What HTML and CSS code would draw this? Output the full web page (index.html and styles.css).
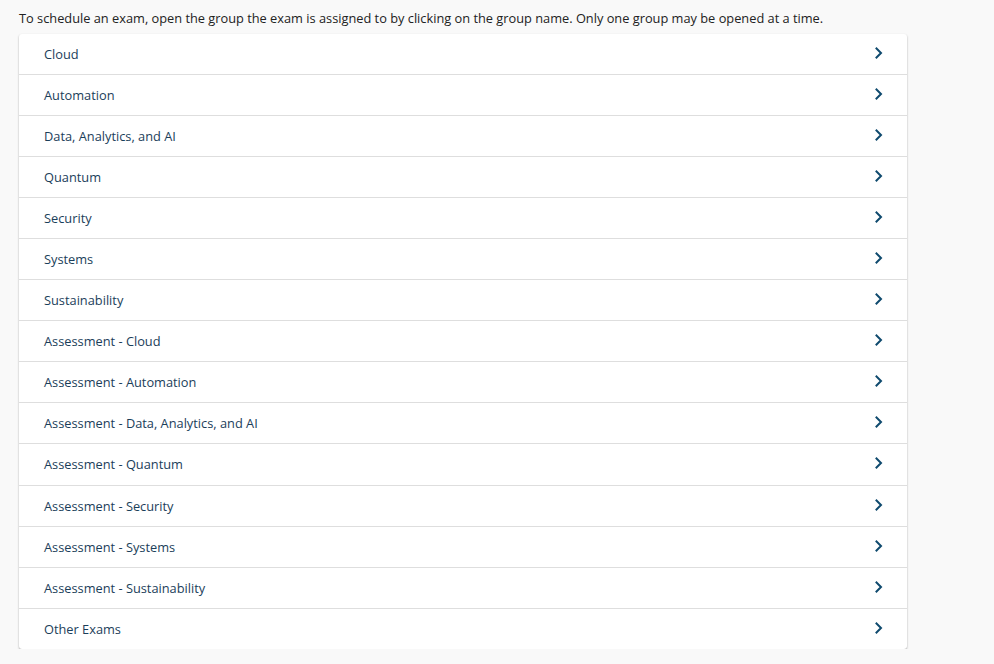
FILE: index.html
```html
<!DOCTYPE html>
<html>
<head>
<meta charset="utf-8">
<link rel="stylesheet" href="styles.css">
</head>
<body>
<div class="page">
  <p class="intro">To schedule an exam, open the group the exam is assigned to by clicking on the group name. Only one group may be opened at a time.</p>
  <ul class="groups">
    <li class="group"><span>Cloud</span><svg class="chev" viewBox="0 0 10 12"><path d="M2.5 1.5 7 6 2.5 10.5"/></svg></li>
    <li class="group"><span>Automation</span><svg class="chev" viewBox="0 0 10 12"><path d="M2.5 1.5 7 6 2.5 10.5"/></svg></li>
    <li class="group"><span>Data, Analytics, and AI</span><svg class="chev" viewBox="0 0 10 12"><path d="M2.5 1.5 7 6 2.5 10.5"/></svg></li>
    <li class="group"><span>Quantum</span><svg class="chev" viewBox="0 0 10 12"><path d="M2.5 1.5 7 6 2.5 10.5"/></svg></li>
    <li class="group"><span>Security</span><svg class="chev" viewBox="0 0 10 12"><path d="M2.5 1.5 7 6 2.5 10.5"/></svg></li>
    <li class="group"><span>Systems</span><svg class="chev" viewBox="0 0 10 12"><path d="M2.5 1.5 7 6 2.5 10.5"/></svg></li>
    <li class="group"><span>Sustainability</span><svg class="chev" viewBox="0 0 10 12"><path d="M2.5 1.5 7 6 2.5 10.5"/></svg></li>
    <li class="group"><span>Assessment - Cloud</span><svg class="chev" viewBox="0 0 10 12"><path d="M2.5 1.5 7 6 2.5 10.5"/></svg></li>
    <li class="group"><span>Assessment - Automation</span><svg class="chev" viewBox="0 0 10 12"><path d="M2.5 1.5 7 6 2.5 10.5"/></svg></li>
    <li class="group"><span>Assessment - Data, Analytics, and AI</span><svg class="chev" viewBox="0 0 10 12"><path d="M2.5 1.5 7 6 2.5 10.5"/></svg></li>
    <li class="group"><span>Assessment - Quantum</span><svg class="chev" viewBox="0 0 10 12"><path d="M2.5 1.5 7 6 2.5 10.5"/></svg></li>
    <li class="group"><span>Assessment - Security</span><svg class="chev" viewBox="0 0 10 12"><path d="M2.5 1.5 7 6 2.5 10.5"/></svg></li>
    <li class="group"><span>Assessment - Systems</span><svg class="chev" viewBox="0 0 10 12"><path d="M2.5 1.5 7 6 2.5 10.5"/></svg></li>
    <li class="group"><span>Assessment - Sustainability</span><svg class="chev" viewBox="0 0 10 12"><path d="M2.5 1.5 7 6 2.5 10.5"/></svg></li>
    <li class="group"><span>Other Exams</span><svg class="chev" viewBox="0 0 10 12"><path d="M2.5 1.5 7 6 2.5 10.5"/></svg></li>
  </ul>
</div>
</body>
</html>
```
FILE: styles.css
```css
html, body {
  margin: 0;
  padding: 0;
  background: #f9f9f9;
}
body {
  font-family: "Open Sans", "Liberation Sans", sans-serif;
  font-size: 12.8px;
  color: #222;
}
.page {
  width: 888px;
  padding: 9px 0 0 19px;
}
.intro {
  margin: 0 0 7px 0;
  line-height: 18px;
  color: #222;
}
.groups {
  list-style: none;
  margin: 0;
  padding: 0;
  background: #fff;
  border-radius: 3px;
  box-shadow: 0 1px 2px rgba(0, 0, 0, 0.35);
}
.group {
  display: flex;
  align-items: center;
  justify-content: space-between;
  height: 40.06px;
  padding: 0 23px 0 25px;
  border-bottom: 1px solid #dedede;
  color: #1b3e5a;
  cursor: pointer;
}
.group:last-child {
  border-bottom: none;
}
.chev {
  width: 10px;
  height: 12px;
  margin-top: -2px;
  fill: none;
  stroke: #0f4a6e;
  stroke-width: 2;
  stroke-linecap: square;
}
```
